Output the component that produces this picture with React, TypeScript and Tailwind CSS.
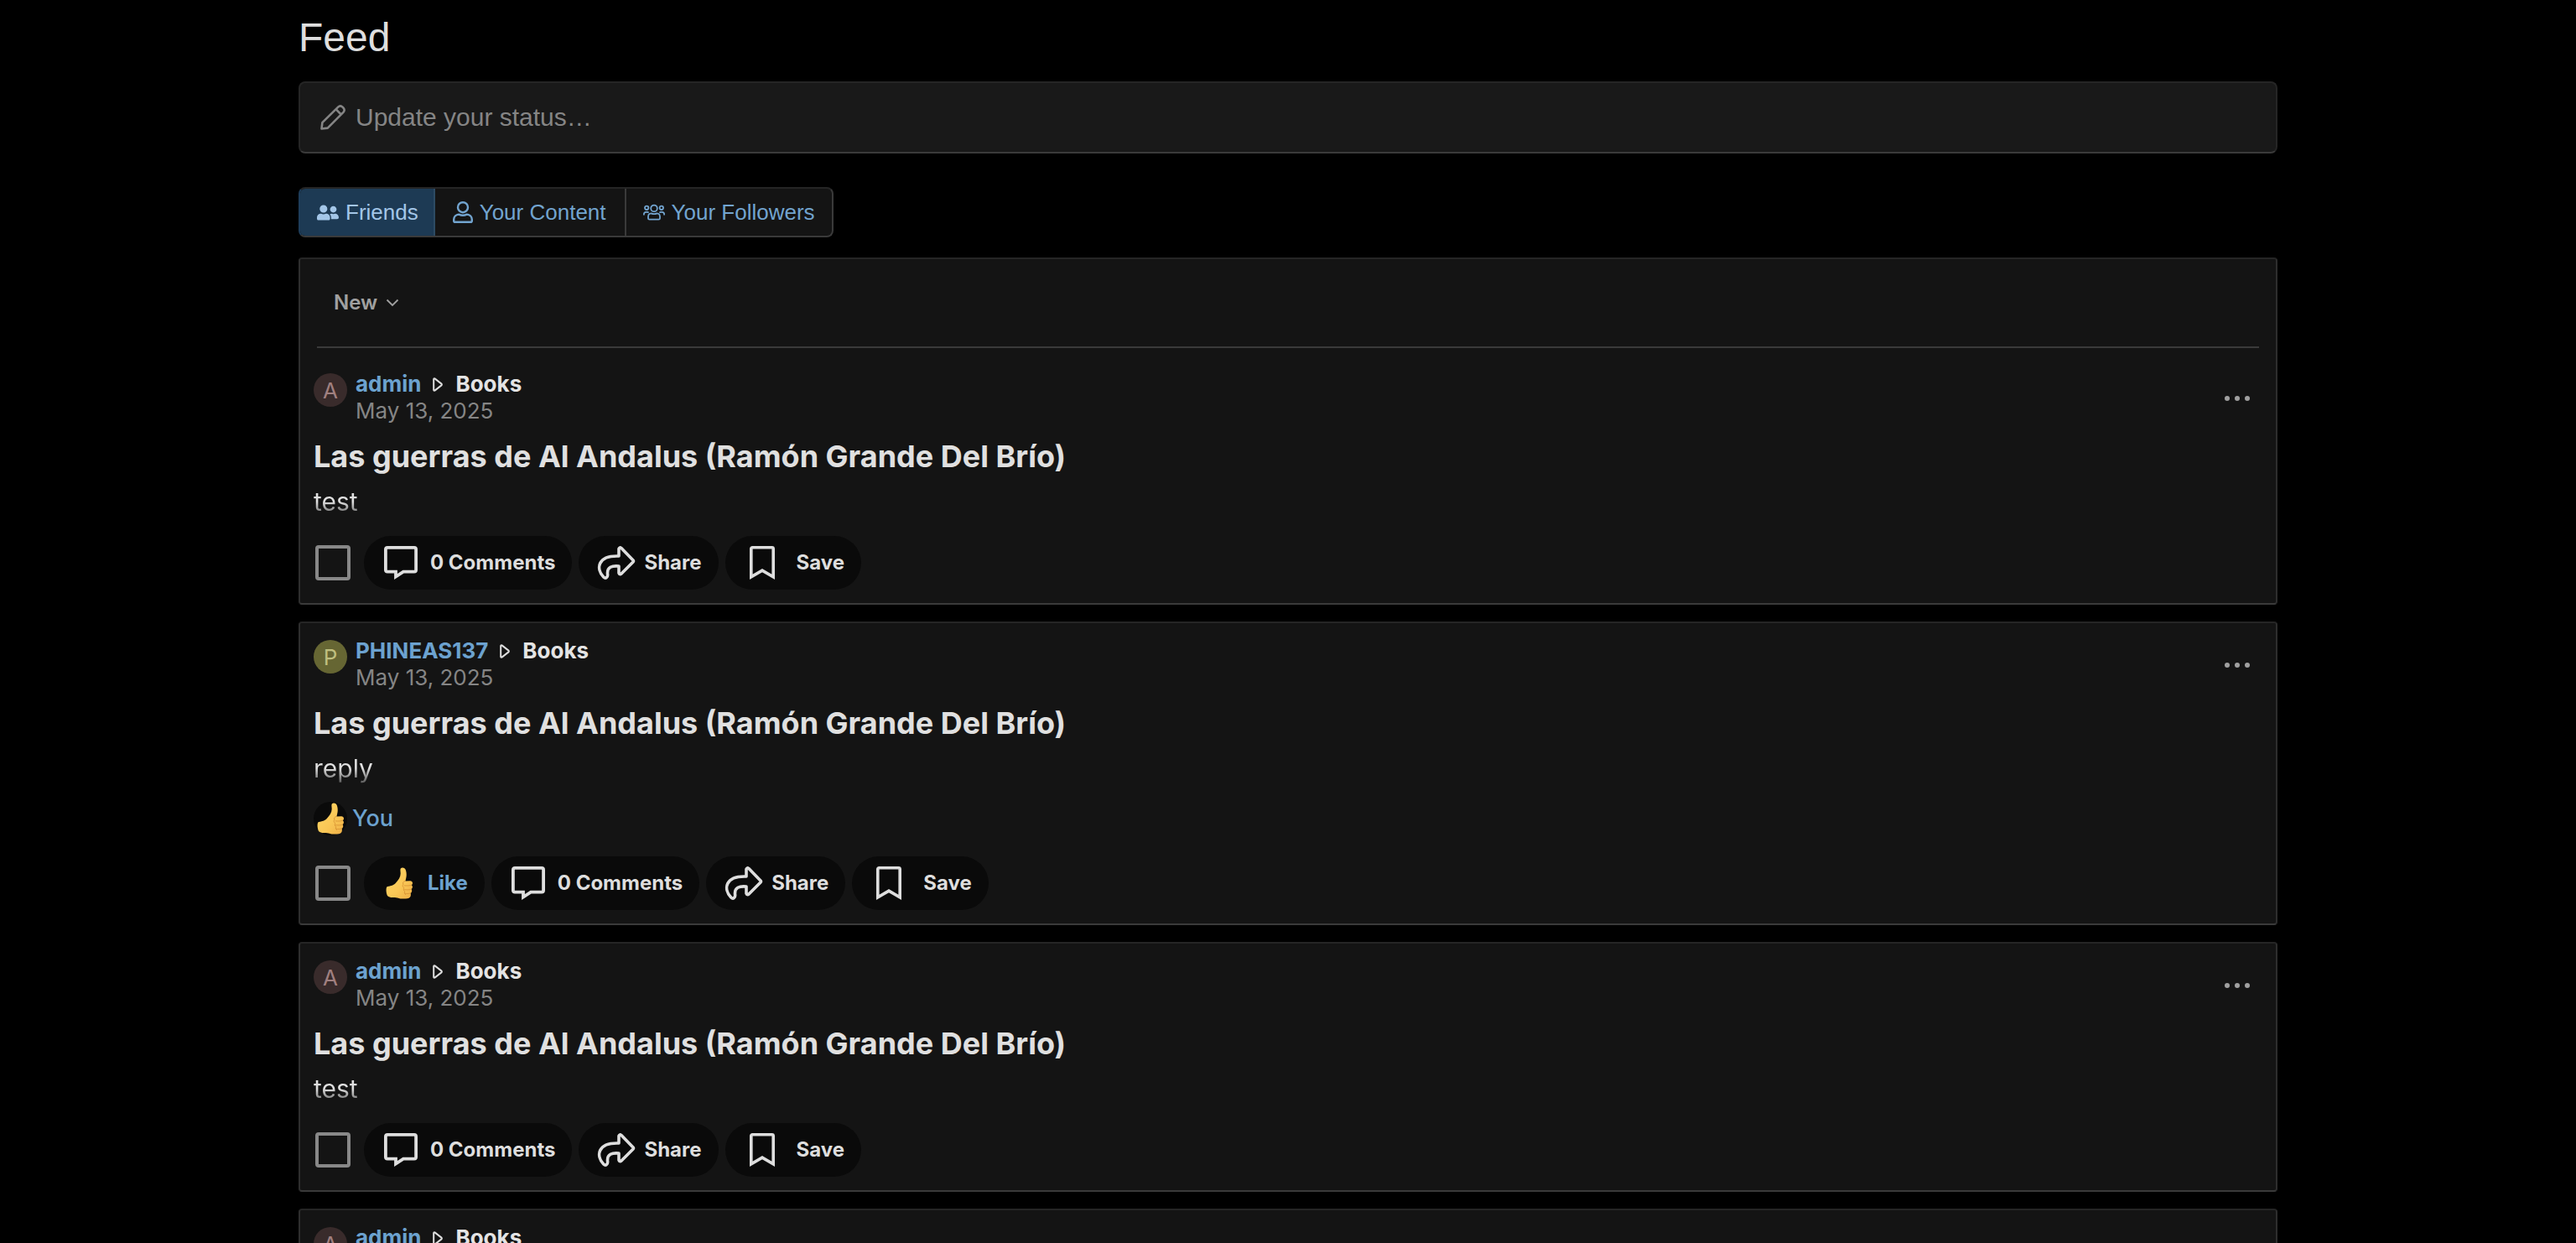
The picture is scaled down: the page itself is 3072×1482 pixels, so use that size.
import type { ReactNode } from "react";

function PencilIcon() {
  return (
    <svg viewBox="0 0 30 30" className="size-[30px] shrink-0" fill="none" stroke="currentColor" strokeWidth="2.6" strokeLinejoin="round" aria-hidden="true">
      <path d="M1.500 28.500 2.400 21.200 21.200 2.600Q23.500.4 26 2.200L27.800 4Q29.600 6.400 27.400 8.800L8.800 27.600Z" />
      <path d="M18.500 5.200 24.800 11.500" />
    </svg>
  );
}

function FriendsIcon() {
  return (
    <svg viewBox="0 0 640 512" className="h-[21px] w-[26px] shrink-0" fill="currentColor" aria-hidden="true">
      <path d="M192 256c61.900 0 112-50.100 112-112S253.900 32 192 32 80 82.100 80 144s50.100 112 112 112zm76.800 32h-8.300c-20.800 10-43.900 16-68.500 16s-47.600-6-68.500-16h-8.300C51.600 288 0 339.600 0 403.200V432c0 26.500 21.500 48 48 48h288c26.500 0 48-21.500 48-48v-28.800c0-63.600-51.600-115.200-115.200-115.200zM480 256c53 0 96-43 96-96s-43-96-96-96-96 43-96 96 43 96 96 96zm48 32h-3.800c-13.900 4.800-28.600 8-44.200 8s-30.300-3.200-44.200-8H432c-20.400 0-39.200 5.900-55.700 15.400 24.400 26.300 39.700 61.200 39.700 99.800v38.400c0 2.200-.5 4.300-.6 6.400H592c26.500 0 48-21.500 48-48 0-61.900-50.100-112-112-112z" />
    </svg>
  );
}

function UserIcon() {
  return (
    <svg viewBox="0 0 24 26" className="h-[26px] w-6 shrink-0" fill="none" stroke="currentColor" strokeWidth="2.4" aria-hidden="true">
      <circle cx="12" cy="7.200" r="6" />
      <path d="M7.200 15.600C3.600 15.800 1.200 18.400 1.200 21.800v1.400q0 1.600 1.600 1.600h18.400q1.600 0 1.600-1.600v-1.400c0-3.400-2.400-6-6-6.200-1.800.8-3 1.100-4.800 1.100s-3-.3-4.800-1.100Z" />
    </svg>
  );
}

function UsersIcon() {
  return (
    <svg viewBox="0 0 26 20" className="h-5 w-[26px] shrink-0" fill="none" stroke="currentColor" strokeWidth="1.800" aria-hidden="true">
      <circle cx="13" cy="5.400" r="3.800" />
      <circle cx="4.200" cy="4.800" r="2.200" />
      <circle cx="21.800" cy="4.800" r="2.200" />
      <path d="M9.600 11.400c-2.300.2-3.600 1.800-3.600 3.800v2q0 1.500 1.500 1.500h11q1.500 0 1.500-1.500v-2c0-2-1.300-3.600-3.600-3.800-2.200 1-4.600 1-6.800 0Z" />
      <path d="M.9 13.500v-1q0-2.600 2.600-2.600h1.800l1.400.6M25.100 13.500v-1q0-2.600-2.600-2.600h-1.800l-1.400.6" />
    </svg>
  );
}

function ChevronIcon() {
  return (
    <svg viewBox="0 0 16 10" className="h-[10px] w-4" fill="none" stroke="currentColor" strokeWidth="1.800" aria-hidden="true">
      <path d="M1.500 1.500 8 8l6.500-6.500" />
    </svg>
  );
}

function PlayIcon() {
  return (
    <svg viewBox="0 0 12 17" className="h-[17px] w-3 shrink-0 text-[#dedede]" fill="none" stroke="currentColor" strokeWidth="2" strokeLinejoin="round" aria-hidden="true">
      <path d="M1.200 2.200v12.600q.2 1.200 1.300.8l8-6.200q.7-.9 0-1.800l-8-6.200q-1.100-.4-1.300.8Z" />
    </svg>
  );
}

function MoreIcon() {
  return (
    <svg viewBox="0 0 30 6" className="h-[6px] w-[30px]" fill="currentColor" aria-hidden="true">
      <circle cx="3" cy="3" r="3" />
      <circle cx="15" cy="3" r="3" />
      <circle cx="27" cy="3" r="3" />
    </svg>
  );
}

function CommentIcon() {
  return (
    <svg viewBox="0 0 40 40" className="size-10 shrink-0" fill="none" stroke="currentColor" strokeWidth="3.800" aria-hidden="true">
      <path d="M4 1.900h32q2.100 0 2.100 2.100v24.500q0 2.100-2.100 2.100H23L14 36.500v-5.900H4q-2.100 0-2.100-2.100V4q0-2.100 2.100-2.100Z" />
    </svg>
  );
}

function ShareIcon() {
  return (
    <svg viewBox="0 0 46 40" className="h-10 w-[46px] shrink-0" fill="none" stroke="currentColor" strokeWidth="3.600" strokeLinejoin="round" aria-hidden="true">
      <path d="M26 12V3.400q.8-2.500 3-.8L43 17q.9 1 0 2L29 33q-2.200 1.600-3-.8V24c-8-.8-14.500 1-13.400 9.800.4 3.400-2.200 5.600-4.800 3.200C-1.600 27 .5 11 26 12Z" />
    </svg>
  );
}

function BookmarkIcon() {
  return (
    <svg viewBox="0 0 30 40" className="h-10 w-[30px] shrink-0" fill="none" stroke="currentColor" strokeWidth="3.600" aria-hidden="true">
      <path d="M3.400 1.800h23.200q1.600 0 1.600 1.600v33.400L15 29.200 1.800 36.800V3.400q0-1.600 1.600-1.600Z" />
    </svg>
  );
}

function ThumbIcon() {
  return (
    <svg viewBox="0 0 32 38" className="h-[38px] w-8 shrink-0" aria-hidden="true">
      <defs>
        <linearGradient id="thumb" x1="0" y1="0" x2="1" y2="1">
          <stop offset="0" stopColor="#ffd766" />
          <stop offset=".6" stopColor="#f9c655" />
          <stop offset="1" stopColor="#eeae45" />
        </linearGradient>
      </defs>
      <path fill="url(#thumb)" d="M17.800 1.600c1.600-2 5.200-1.200 6.200 2.200 1.400 4.600.6 8.600-.6 12.600l5.600-.2c3.200 0 3.900 3.600 1.900 5 1.500 1.400 1.300 4-.4 4.900 1.300 1.700.7 3.900-.9 4.700 1 3-.4 6.300-3.600 6.500-4.500.4-8.500.4-12-.9-4.500-.2-8.500.4-12-2.400C.6 31 0 26.500 1.200 23.600c2.800-1.300 7.300-1.100 10.300-4.300 3.700-4 6.200-7.800 6.200-11.800 0-2.300-.7-4.400.1-5.900Z" />
      <path fill="none" stroke="#dd9a38" strokeWidth="1" strokeLinecap="round" d="M30.500 21.300c-2.200.8-5 .8-8.300.6m8.200 4.300c-2.300.9-5 .8-7.800.5m6.700 4.300c-2 .7-4 .6-6.300.3M23 16.500c-2.400.6-3 2-2 3.600-1.300 1.600-1 3.400.8 4.400-1 1.700-.5 3.400 1 4.300-.8 1.500-.4 3 .8 3.800" />
    </svg>
  );
}

function ActionButton({ children, className }: { children: ReactNode; className: string }) {
  return (
    <button type="button" className={`flex h-16 items-center rounded-full bg-[#0a0a0a] pr-5 text-2xl font-bold text-[#dedede] ${className}`}>
      {children}
    </button>
  );
}

type Post = { author: string; initial: string; avatar: string; body: string; liked?: boolean };

function PostItem({ post, id }: { post: Post; id: number }) {
  return (
    <article className="px-4 pt-[17px] pb-4">
      <header className="flex items-start">
        <span className={`mt-[3px] flex size-10 shrink-0 items-center justify-center rounded-full text-[26px] ${post.avatar}`}>{post.initial}</span>
        <div className="ml-[10px] text-[26px] leading-8">
          <div className="flex items-center font-bold">
            <a href="#author" className="text-[#6ca2cf]">{post.author}</a>
            <span className="mr-[15px] ml-[14px] flex"><PlayIcon /></span>
            <a href="#books" className="text-[#e4e4e4]">Books</a>
          </div>
          <time dateTime="2025-05-13" className="block text-[#858585]">May 13, 2025</time>
        </div>
        <button type="button" aria-label="More options" className="mt-[30px] mr-[15px] ml-auto text-[#a0a0a0]"><MoreIcon /></button>
      </header>
      <h2 className="mt-[14px] text-4xl leading-[48px] font-bold text-[#e0e0e0]">Las guerras de Al Andalus (Ramón Grande Del Brío)</h2>
      <p className="mt-[10px] w-fit bg-linear-to-b from-[#e0e0e0] from-50% to-[#4a4a4a] bg-clip-text text-[30px] leading-10 text-transparent">{post.body}</p>
      {post.liked && (
        <div className="mt-4 flex h-12 items-center text-[27px] font-medium text-[#6ca2cf]">
          <span className="flex size-10 items-center justify-center rounded-full bg-[#0a0a0a]"><ThumbIcon /></span>
          <a href="#reactions" className="ml-[6px]">You</a>
        </div>
      )}
      <div className="mt-[21px] flex items-center gap-2">
        <input id={`select-${id}`} type="checkbox" aria-label={`Select post by ${post.author}`} className="mr-2 ml-0.5 size-[42px] shrink-0 appearance-none rounded-[4px] border-4 border-[#888888]" />
        {post.liked && (
          <ActionButton className="gap-[18px] pl-[26px]"><ThumbIcon /><span className="text-[#6ca2cf]">Like</span></ActionButton>
        )}
        <ActionButton className="gap-[15px] pl-6"><CommentIcon />0 Comments</ActionButton>
        <ActionButton className="gap-[10px] pl-[22px]"><ShareIcon />Share</ActionButton>
        <ActionButton className="gap-[26px] pl-[29px]"><BookmarkIcon />Save</ActionButton>
      </div>
    </article>
  );
}

const ADMIN = { author: "admin", initial: "A", avatar: "bg-[#392b2b] text-[#a18080]" };
const PHINEAS = { author: "PHINEAS137", initial: "P", avatar: "bg-[#666633] text-[#bfbf7f]" };

const posts: Post[] = [
  { ...ADMIN, body: "test" },
  { ...PHINEAS, body: "reply", liked: true },
  { ...ADMIN, body: "test" },
  { ...ADMIN, body: "test" },
];

export default function App() {
  return (
    <div className="min-h-screen bg-black font-['Liberation_Sans',sans-serif]">
      <main className="mx-auto max-w-[2400px] px-5 pt-4 pb-5">
        <h1 className="text-5xl leading-[58px] text-[#dedede]">Feed</h1>

        <label className="mt-[23px] flex h-[86px] items-center gap-3 rounded-lg border-2 border-x-[#252525] border-t-[#252525] border-b-[#3a3a3a] bg-[#191919] px-6 text-[#858585]">
          <PencilIcon />
          <input type="text" aria-label="Update your status" placeholder="Update your status…" className="flex-1 bg-transparent text-[30px] leading-9 outline-none placeholder:text-[#858585]" />
        </label>

        <nav className="mt-10 flex h-[60px] w-fit overflow-hidden rounded-lg border-2 border-t-[#252525] border-r-[#3a3a3a] border-b-[#3a3a3a] border-l-[#1e3d5a] bg-[#141414] text-[26px] text-[#72a4cf]">
          <a href="#friends" className="flex items-center gap-2 border-r-2 border-[#2d4a63] bg-[#1d3a54] pr-[18px] pl-5 text-[#a3c6e8]"><FriendsIcon />Friends</a>
          <a href="#content" className="flex items-center gap-2 border-r-2 border-[#3a3a3a] pr-[22px] pl-[21px]"><UserIcon />Your Content</a>
          <a href="#followers" className="flex items-center gap-2 px-5"><UsersIcon />Your Followers</a>
        </nav>

        <div className="mt-6 flex flex-col gap-5 font-['Inter',sans-serif]">
          {posts.map((post, i) => (
            <section key={i} className="rounded-[4px] border-2 border-x-[#2e2e2e] border-t-[#252525] border-b-[#3a3a3a] bg-[#141414]">
              {i === 0 && (
                <div className="mx-5 mb-[10px] flex h-[106px] items-center border-b-2 border-[#3a3a3a]">
                  <button type="button" className="flex items-center gap-[10px] px-5 text-2xl font-semibold text-[#a0a0a0]">New<ChevronIcon /></button>
                </div>
              )}
              <PostItem post={post} id={i} />
            </section>
          ))}
        </div>
      </main>
    </div>
  );
}
